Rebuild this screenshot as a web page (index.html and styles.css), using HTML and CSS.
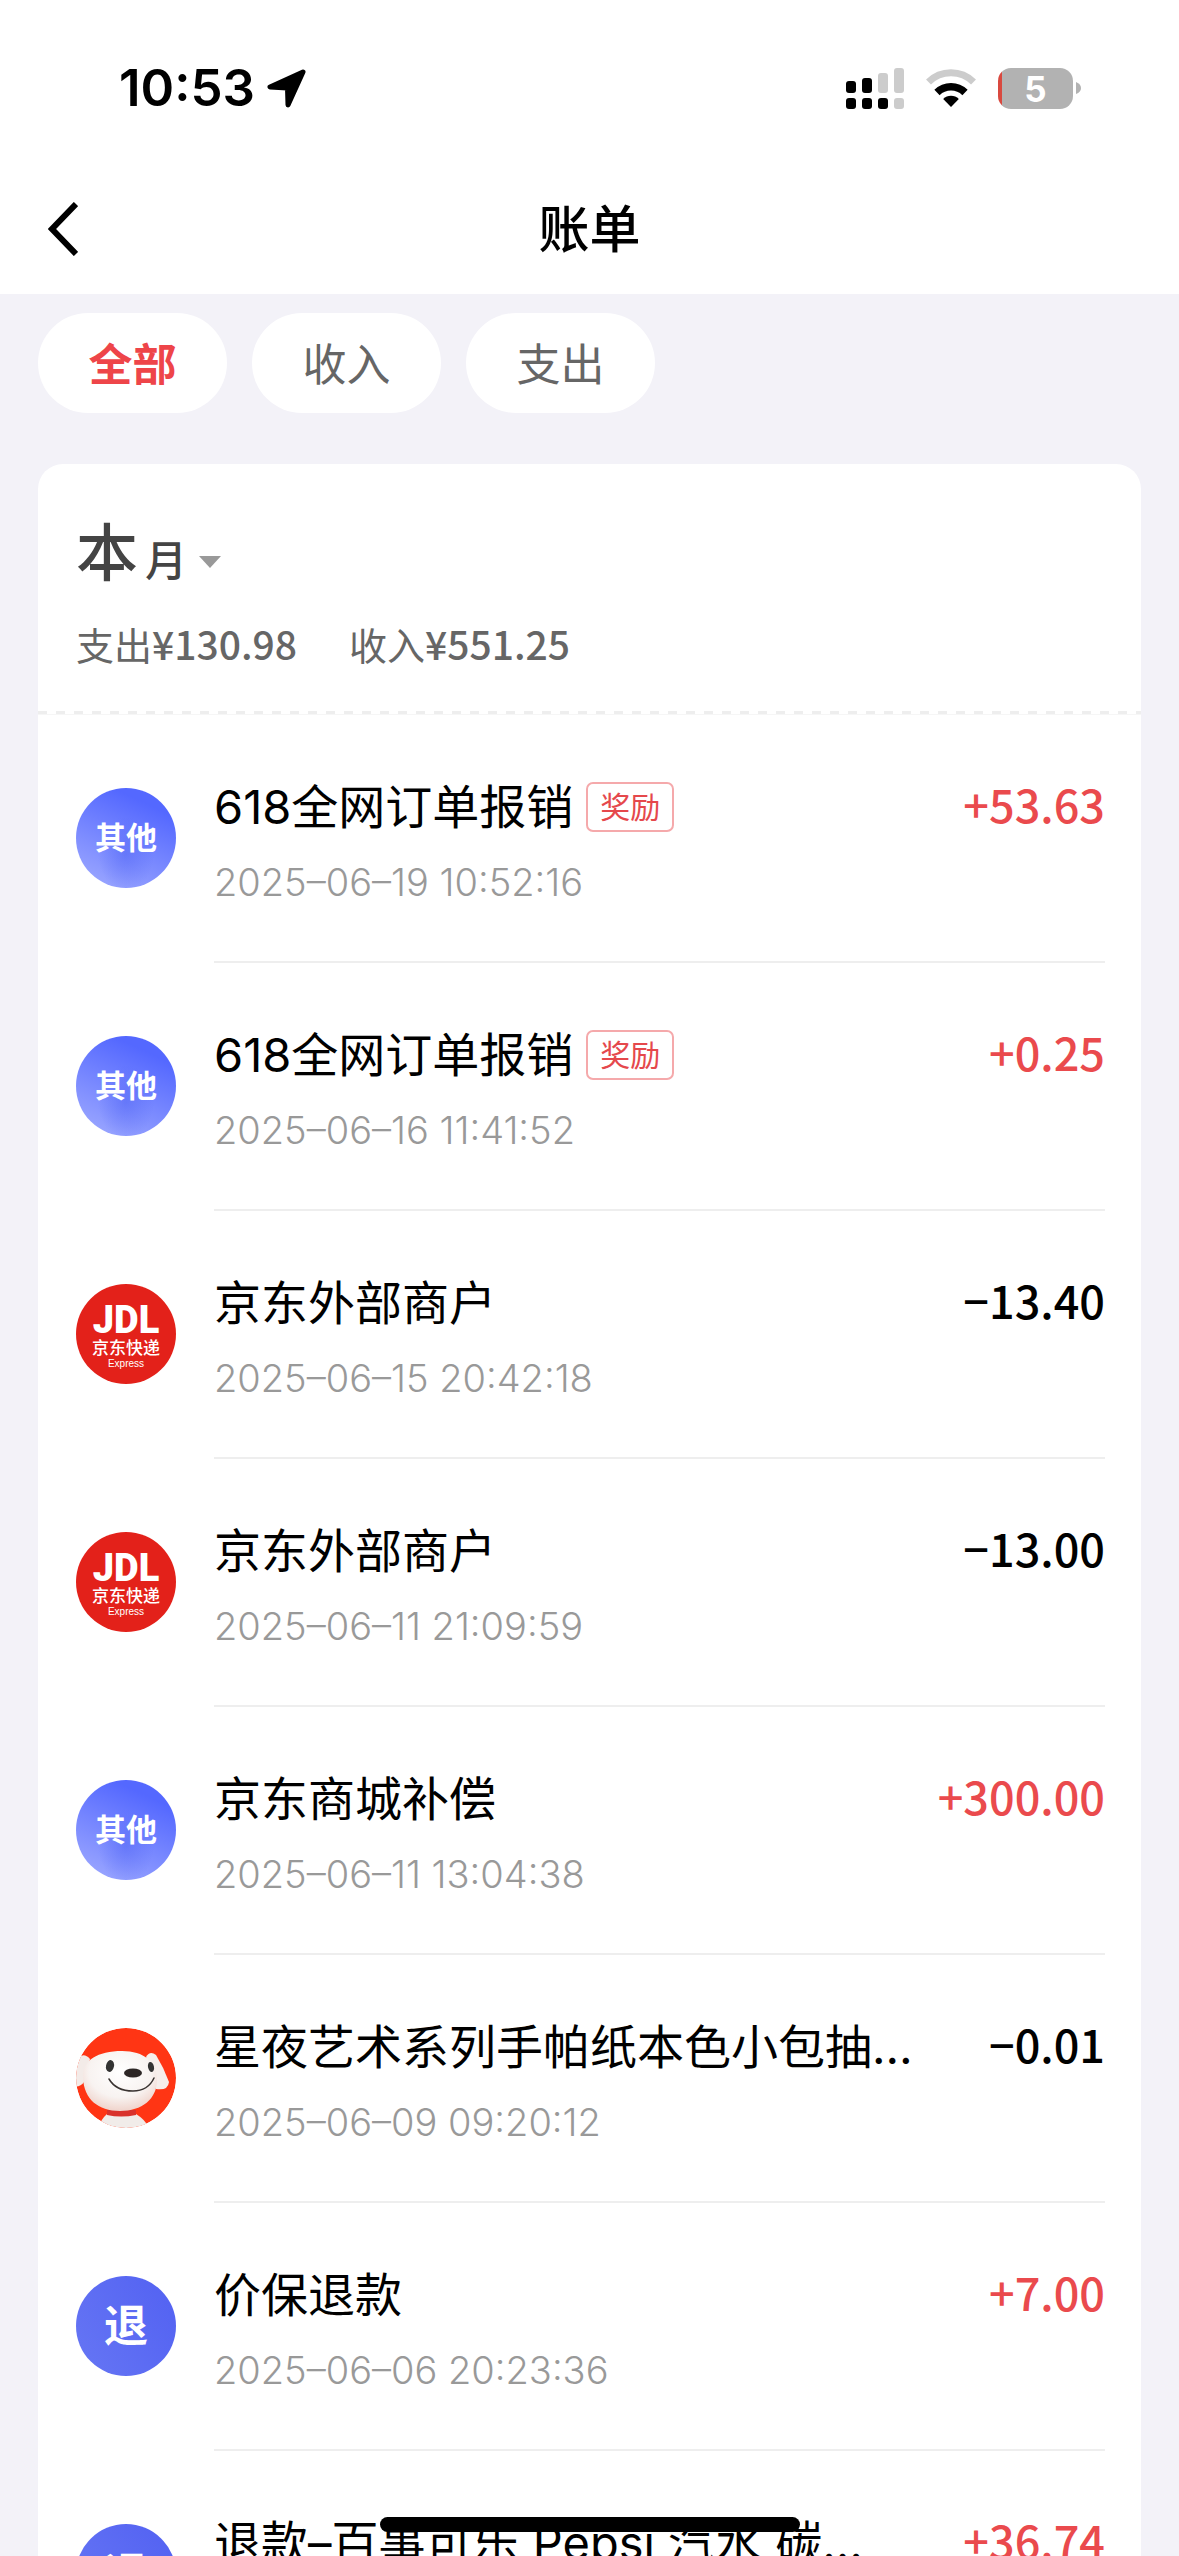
FILE: index.html
```html
<!DOCTYPE html>
<html lang="zh-CN">
<head>
  <meta charset="utf-8">
  <meta name="viewport" content="width=device-width, initial-scale=1">
  <title>账单</title>
  <link rel="stylesheet" href="styles.css">
</head>
<body>
  <div class="app">
    <div class="status">
      <div class="status-left">
        <span class="clock">10:53</span>
        <svg class="icon" width="39" height="39" viewBox="0 0 39 39" aria-hidden="true">
          <path d="M36 3 L3 18 L20.500 19 L21 36 Z" fill="#000" stroke="#000" stroke-width="5" stroke-linejoin="round"/>
        </svg>
      </div>
      <div class="status-right">
        <svg class="icon" width="58" height="41" viewBox="0 0 58 41" aria-hidden="true">
          <g fill="#000">
            <rect x="0" y="13" width="10" height="12" rx="3"/>
            <rect x="16" y="10" width="10" height="15" rx="3"/>
            <rect x="0" y="30" width="10" height="11" rx="3"/>
            <rect x="16" y="30" width="10" height="11" rx="3"/>
            <rect x="32" y="30" width="10" height="11" rx="3"/>
          </g>
          <g fill="#ccc">
            <rect x="32" y="5" width="10" height="20" rx="3"/>
            <rect x="48" y="0" width="10" height="25" rx="3"/>
            <rect x="48" y="30" width="10" height="11" rx="3"/>
          </g>
        </svg>
        <svg class="icon" width="50" height="41" viewBox="0 0 50 41" aria-hidden="true">
          <path d="M2.500 14 A32 32 0 0 1 47.500 14" fill="none" stroke="#ccc" stroke-width="7"/>
          <path d="M11 24.500 A20 20 0 0 1 39 24.500" fill="none" stroke="#000" stroke-width="7.500"/>
          <path d="M25 39 L17.200 31 A11 11 0 0 1 32.800 31 Z" fill="#000"/>
        </svg>
        <div class="battery">
          <span class="battery-body">5</span>
          <svg class="icon" width="5" height="14" viewBox="0 0 5 14" aria-hidden="true"><path d="M0 1 Q5 3 5 7 Q5 11 0 13 Z" fill="#b2b2b2"/></svg>
        </div>
      </div>
    </div>

    <header class="header">
      <button class="back" type="button" aria-label="返回">
        <svg class="icon" width="30" height="54" viewBox="0 0 30 54" aria-hidden="true"><path d="M28 2 L4 27 L28 52" fill="none" stroke="#000" stroke-width="6"/></svg>
      </button>
      <h1 class="title">账单</h1>
    </header>

    <main class="main">
      <nav class="tabs">
        <button class="tab tab-active" type="button">全部</button>
        <button class="tab" type="button">收入</button>
        <button class="tab" type="button">支出</button>
      </nav>

      <section class="card">
        <div class="summary">
          <button class="month" type="button">
            <span class="month-value">本</span>
            <span class="month-unit">月</span>
            <svg class="month-arrow" width="22" height="12" viewBox="0 0 22 12" aria-hidden="true"><path d="M0 0 H22 L11 12 Z" fill="#999"/></svg>
          </button>
          <div class="totals">
            <span>支出<b class="total">¥130.98</b></span>
            <span>收入<b class="total">¥551.25</b></span>
          </div>
        </div>

        <ul class="list">
          <li class="row">
            <span class="avatar avatar-other">其他</span>
            <div class="entry">
              <div class="line"><span class="name">618全网订单报销</span><span class="tag">奖励</span><span class="amount amount-in">+53.63</span></div>
              <time class="date">2025–06–19 10:52:16</time>
            </div>
          </li>
          <li class="row">
            <span class="avatar avatar-other">其他</span>
            <div class="entry">
              <div class="line"><span class="name">618全网订单报销</span><span class="tag">奖励</span><span class="amount amount-in">+0.25</span></div>
              <time class="date">2025–06–16 11:41:52</time>
            </div>
          </li>
          <li class="row">
            <span class="avatar avatar-jdl"><span class="jdl-mark">JDL</span><span class="jdl-name">京东快递</span><span class="jdl-sub">Express</span></span>
            <div class="entry">
              <div class="line"><span class="name">京东外部商户</span><span class="amount">−13.40</span></div>
              <time class="date">2025–06–15 20:42:18</time>
            </div>
          </li>
          <li class="row">
            <span class="avatar avatar-jdl"><span class="jdl-mark">JDL</span><span class="jdl-name">京东快递</span><span class="jdl-sub">Express</span></span>
            <div class="entry">
              <div class="line"><span class="name">京东外部商户</span><span class="amount">−13.00</span></div>
              <time class="date">2025–06–11 21:09:59</time>
            </div>
          </li>
          <li class="row">
            <span class="avatar avatar-other">其他</span>
            <div class="entry">
              <div class="line"><span class="name">京东商城补偿</span><span class="amount amount-in">+300.00</span></div>
              <time class="date">2025–06–11 13:04:38</time>
            </div>
          </li>
          <li class="row">
            <svg class="avatar" viewBox="0 0 100 100" aria-hidden="true">
              <defs>
                <clipPath id="round"><circle cx="50" cy="50" r="50"/></clipPath>
                <radialGradient id="fur" cx="0.500" cy="0.350" r="0.700">
                  <stop offset="0" stop-color="#fff"/>
                  <stop offset="0.600" stop-color="#f8f3f1"/>
                  <stop offset="1" stop-color="#eecdc4"/>
                </radialGradient>
              </defs>
              <g clip-path="url(#round)">
                <rect width="100" height="100" fill="#ff3514"/>
                <path d="M31 86 Q24 92 22 102 H74 Q70 92 60 86 Z" fill="#f1ece9"/>
                <path d="M31 82 H60 V87 Q45 90 31 87 Z" fill="#d9322c"/>
                <path d="M2 30 Q8 24 14 31 L8 54 Q4 60 -4 58 Z" fill="#f3ebe8"/>
                <path d="M70 29 Q74 22 80 27 Q88 40 93 54 Q92 63 80 61 Z" fill="#f6eeeb"/>
                <path d="M7 50 C6 32 22 23 46 23 C68 23 81 34 81 52 C81 71 66 83 44 83 C22 83 8 71 7 50 Z" fill="url(#fur)"/>
                <ellipse cx="34" cy="38" rx="4" ry="6" fill="#333" transform="rotate(12 34 38)"/>
                <ellipse cx="75" cy="39" rx="3" ry="5" fill="#333" transform="rotate(-12 75 39)"/>
                <ellipse cx="57" cy="45" rx="9" ry="4.500" fill="#2d2726"/>
                <path d="M33 51 Q40 63 57 63 Q72 63 78 50" fill="none" stroke="#3a3432" stroke-width="1.500" stroke-linecap="round"/>
              </g>
            </svg>
            <div class="entry">
              <div class="line"><span class="name">星夜艺术系列手帕纸本色小包抽…</span><span class="amount">−0.01</span></div>
              <time class="date">2025–06–09 09:20:12</time>
            </div>
          </li>
          <li class="row">
            <span class="avatar avatar-refund">退</span>
            <div class="entry">
              <div class="line"><span class="name">价保退款</span><span class="amount amount-in">+7.00</span></div>
              <time class="date">2025–06–06 20:23:36</time>
            </div>
          </li>
          <li class="row">
            <span class="avatar avatar-refund">退</span>
            <div class="entry">
              <div class="line"><span class="name">退款–百事可乐 Pepsi 汽水 碳…</span><span class="amount amount-in">+36.74</span></div>
            </div>
          </li>
        </ul>
      </section>
    </main>
    <div class="home-bar"></div>
  </div>
</body>
</html>
```
FILE: styles.css
```css
* {
  box-sizing: border-box;
}

body {
  margin: 0;
  background: #f3f2f8;
  color: #000;
  font-family: Inter, "Noto Sans CJK SC", sans-serif;
}

button {
  padding: 0;
  border: 0;
  background: none;
  color: inherit;
  font: inherit;
}

.icon {
  display: block;
  flex: none;
}

.app {
  display: flex;
  flex-direction: column;
  height: 100vh;
  overflow: hidden;
}

/* Status bar */
.status {
  display: flex;
  flex: none;
  justify-content: space-between;
  align-items: center;
  height: 176px;
  padding: 0 98px 0 119px;
  background: #fff;
}

.status-left {
  display: flex;
  align-items: center;
  gap: 12px;
}

.clock {
  font-size: 51px;
  font-weight: 600;
  line-height: 60px;
}

.status-right {
  display: flex;
  align-items: center;
  gap: 22px;
}

.battery {
  display: flex;
  align-items: center;
  gap: 3px;
}

.battery-body {
  width: 75px;
  height: 41px;
  border-radius: 13px;
  background: linear-gradient(90deg, #d9493f 4px, #b2b2b2 4px);
  color: #fff;
  font-size: 35px;
  font-weight: 700;
  line-height: 42px;
  text-align: center;
}

/* Page header */
.header {
  display: grid;
  flex: none;
  grid-template-columns: 1fr auto 1fr;
  align-items: center;
  height: 118px;
  padding: 0 48px 12px;
  background: #fff;
}

.back {
  justify-self: start;
}

.title {
  margin: 0;
  padding-top: 2px;
  font-size: 51px;
  font-weight: 500;
  line-height: 74px;
}

/* Filters */
.main {
  flex: 1;
  min-height: 0;
  padding: 19px 38px 0;
  overflow: hidden;
}

.tabs {
  display: flex;
  gap: 25px;
  margin-bottom: 51px;
}

.tab {
  width: 189px;
  height: 100px;
  padding-top: 4px;
  border-radius: 50px;
  background: #fff;
  color: #666;
  font-size: 44px;
  line-height: 60px;
}

.tab-active {
  color: #ee4549;
  font-weight: 700;
}

/* Bill card */
.card {
  border-radius: 25px 25px 0 0;
  background: #fff;
}

.summary {
  padding: 52px 38px 44px;
  border-bottom: 1px solid #f6f6f6;
  background: repeating-linear-gradient(90deg, #eee 0 9px, #fff 9px 18px) left bottom / 100% 3px no-repeat;
}

.month {
  display: flex;
  align-items: baseline;
  height: 76px;
  color: #444;
  font-weight: 500;
  line-height: 76px;
}

.month-value {
  font-size: 62px;
  font-weight: 500;
}

.month-unit {
  margin-left: 7px;
  font-size: 42px;
}

.month-arrow {
  align-self: center;
  margin: 16px 0 0 12px;
}

.totals {
  display: flex;
  gap: 52px;
  height: 54px;
  margin-top: 24px;
  color: #666;
  font-size: 38px;
  line-height: 54px;
}

.total {
  font-family: "Noto Sans CJK SC", sans-serif;
  font-size: 39px;
  font-weight: 500;
}

.list {
  margin: 0;
  padding: 0 36px 0 38px;
  list-style: none;
}

.row {
  display: flex;
  gap: 38px;
  height: 248px;
}

.avatar {
  display: flex;
  flex: none;
  flex-direction: column;
  align-items: center;
  justify-content: center;
  width: 100px;
  height: 100px;
  margin-top: 73px;
  border-radius: 50%;
  color: #fff;
  font-weight: 700;
}

.avatar-other {
  background:
    radial-gradient(ellipse at 50% 66%, rgba(80, 100, 245, 0.500), transparent 40%),
    linear-gradient(205deg, #5468ff 20%, #98a4ff 90%);
  font-size: 31px;
  line-height: 40px;
}

.avatar-refund {
  background: linear-gradient(60deg, #6676f4, #5261f2);
  font-size: 44px;
  line-height: 60px;
}

.avatar-jdl {
  padding-top: 4px;
  background: #e3211a;
  white-space: nowrap;
}

.jdl-mark {
  font-family: Roboto, sans-serif;
  font-size: 38px;
  font-weight: 900;
  line-height: 34px;
}

.jdl-name {
  margin-top: 1px;
  font-size: 17px;
  font-weight: 500;
  line-height: 20px;
}

.jdl-sub {
  font-family: "Liberation Sans", sans-serif;
  font-size: 10px;
  font-weight: 400;
  line-height: 12px;
}

.entry {
  flex: 1;
  min-width: 0;
  padding-top: 59px;
  border-bottom: 2px solid #eee;
}

.line {
  display: flex;
  align-items: flex-start;
}

.name {
  overflow: hidden;
  font-size: 47px;
  line-height: 66px;
  text-overflow: ellipsis;
  white-space: nowrap;
}

.tag {
  flex: none;
  align-self: center;
  height: 50px;
  margin-left: 13px;
  padding: 0 12px;
  border: 2px solid #f5a9ab;
  border-radius: 7px;
  color: #e5484c;
  font-size: 30px;
  line-height: 46px;
}

.amount {
  flex: none;
  margin-left: auto;
  font-family: "Noto Sans CJK SC", sans-serif;
  font-size: 45px;
  font-weight: 500;
  line-height: 60px;
}

.amount-in {
  color: #ea4a4d;
}

.date {
  display: block;
  margin-top: 17px;
  color: #999;
  font-size: 38px;
  font-weight: 300;
  line-height: 50px;
}

.home-bar {
  position: fixed;
  bottom: 24px;
  left: 50%;
  width: 420px;
  height: 15px;
  margin-left: -210px;
  border-radius: 8px;
  background: #000;
}
```
